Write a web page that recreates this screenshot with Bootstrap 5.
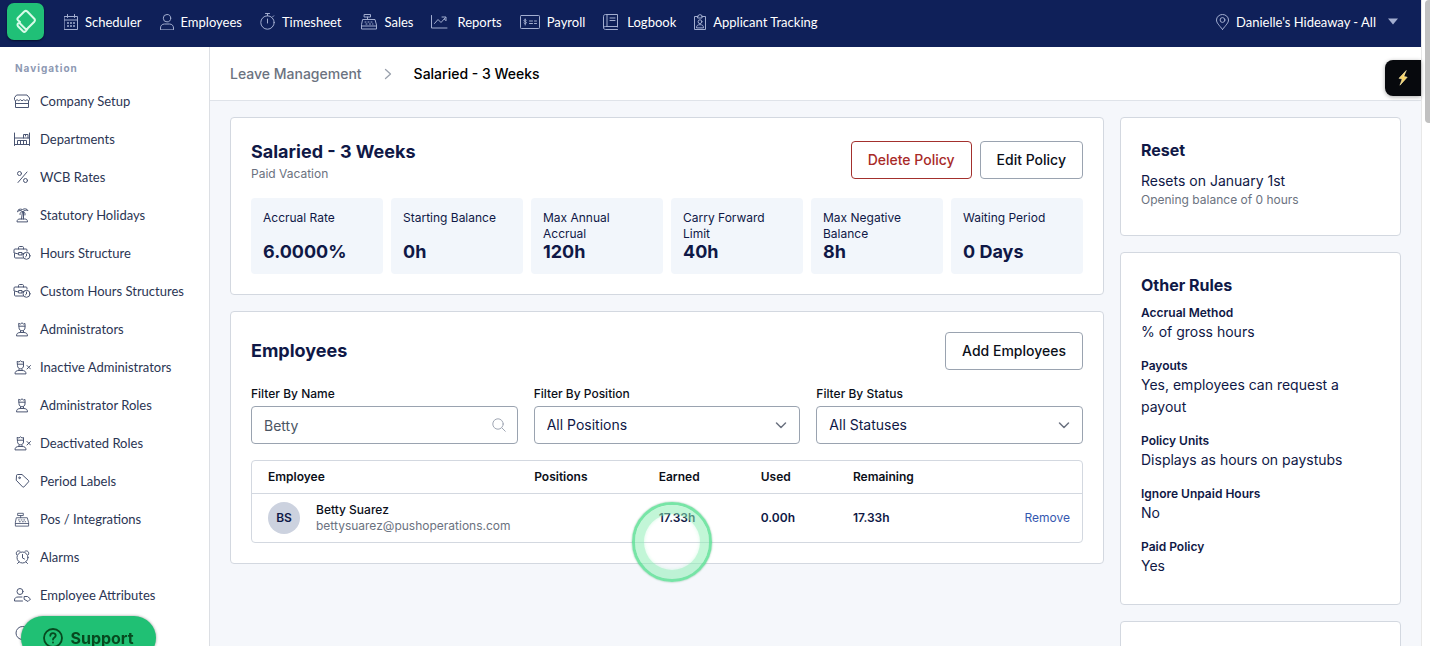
<!DOCTYPE html>
<html lang="en">
<head>
<meta charset="utf-8">
<meta name="viewport" content="width=device-width, initial-scale=1">
<title>Leave Management</title>
<link href="https://cdn.jsdelivr.net/npm/bootstrap@5.3.0/dist/css/bootstrap.min.css" rel="stylesheet">
<style>
  :root { --ink: #0f1846; --navy: #0f2059; --line: #d3d8e0; --muted: #6b7280; --page: #f5f7fb; }
  body { font-family: Inter, sans-serif; font-size: 14px; line-height: 22px; color: var(--ink); background: #fff; }
  svg { flex: none; fill: none; stroke: currentColor; stroke-linecap: round; stroke-linejoin: round; }

  .topbar { height: 47px; background: var(--navy); font-family: Lato, sans-serif; padding: 0 22px 4px 7px; }
  .topbar a { color: #fff; font-size: 13px; line-height: 20px; gap: 7px; }
  .topbar a svg { color: #a3aed0; stroke-width: 1; }
  .main-nav { gap: 18px; margin-left: 20px; }
  .brand { width: 37px; height: 37px; border-radius: 7px; background: #20c077; box-shadow: 0 1px 2px #0008; }
  .topbar .brand svg { color: #d9fbe9; stroke-width: 2; }

  .sidebar { width: 210px; border-right: 1px solid #dcdfe4; font-family: Lato, sans-serif; padding-top: 11px; }
  .side-title { font-family: Inter, sans-serif; font-size: 10px; line-height: 20px; font-weight: 700; letter-spacing: 1px; color: #8e99b3; padding-left: 15px; margin-bottom: 4px; }
  .sidebar a { height: 38px; padding-left: 13px; gap: 9px; color: #2b3553; font-size: 13px; line-height: 20px; }
  .sidebar a svg { color: #4a5572; }

  .crumbs { height: 54px; border-bottom: 1px solid #dfe3e9; padding-left: 20px; gap: 22px; font-weight: 500; }
  .crumbs a { color: var(--muted); }
  .crumbs svg { color: #9aa1ad; }
  .page-area { background: var(--page); }
  .workspace { padding: 16px 20px 0; gap: 16px; }
  .panel { background: #fff; border: 1px solid var(--line); border-radius: 4px; padding: 20px; }
  .rail { width: 281px; }
  .rail .panel { padding-bottom: 27px; }
  .rail h2 { font-size: 16px; line-height: 24px; font-weight: 700; margin: 0 0 8px; }
  .title { font-size: 18px; line-height: 28px; font-weight: 700; margin: 0; }
  .fine { font-size: 12px; line-height: 16px; }
  .dim { color: var(--muted); }

  .btn-plain { height: 38px; padding: 0 16px; border: 1px solid #9aa3b0; border-radius: 4px; background: #fff; color: #0b0f19; font-size: 14px; font-weight: 500; line-height: 20px; }
  .btn-plain.danger { border-color: #a3302d; color: #a82a27; }

  .tiles { display: grid; grid-template-columns: repeat(6, 1fr); gap: 8px; }
  .tile { background: #f2f6fb; border-radius: 4px; padding: 12px; }
  .tile dt { font-weight: 400; min-height: 32px; }
  .tile dd { font-size: 18px; line-height: 20px; font-weight: 700; margin: 0; }

  .filters { display: grid; grid-template-columns: repeat(3, 1fr); gap: 16px; }
  .filters label { font-weight: 500; color: #0b0f19; margin-bottom: 4px; display: block; }
  .filters .form-control, .filters .form-select { height: 38px; border: 1px solid #9aa3b0; border-radius: 4px; font-size: 14px; line-height: 20px; padding: 0 12px; color: var(--ink); }
  .filters .form-control { color: #4b5563; padding-right: 36px; }
  .filters .form-select { background-image: url("data:image/svg+xml,%3Csvg xmlns='http://www.w3.org/2000/svg' viewBox='0 0 12 12'%3E%3Cpath d='M1.500 4l4.500 4.500L10.500 4' fill='none' stroke='%236b7280' stroke-width='1.500' stroke-linecap='round' stroke-linejoin='round'/%3E%3C/svg%3E"); background-size: 12px 12px; background-position: right 12px center; }
  .lens { right: 12px; top: 12px; color: #a0a7b4; }

  .grid-wrap { border: 1px solid var(--line); border-radius: 4px; }
  .grid-wrap table { width: 100%; table-layout: fixed; font-size: 12px; line-height: 16px; }
  .grid-wrap th { height: 32px; padding: 0; font-weight: 600; color: #0b0f19; border-bottom: 1px solid var(--line); }
  .grid-wrap td { height: 49px; padding: 0; font-weight: 600; }
  .grid-wrap th:first-child, .grid-wrap td:first-child { padding-left: 16px; }
  .c-name { width: 34%; } .c-pos { width: 15%; } .c-earned { width: 12.300%; } .c-used { width: 11.100%; } .c-left { width: 12%; }
  .avatar { width: 32px; height: 32px; border-radius: 50%; background: #ccd2df; }
  .person { color: #0b0f19; font-weight: 500; }
  .remove { color: #3558b0; font-weight: 400; }
  .pulse { left: -27px; top: 8px; width: 80px; height: 80px; border-radius: 50%; border: 3px solid #5fe096d9; box-shadow: 0 0 2px #7fb896, inset 0 0 0 9px #8defb46b, inset 0 0 3px 10px #8defb433; pointer-events: none; z-index: 2; }

  .rules { margin: 0; display: grid; gap: 15px; }
  .rules dt { font-weight: 600; }
  .rules dd { margin: 0; }

  .bolt { top: 60px; right: 9px; width: 36px; height: 36px; border: 0; border-radius: 8px 0 0 8px; background: #07090d; box-shadow: 0 1px 4px #0005; }
  .support { left: 21px; bottom: -14px; width: 135px; height: 44px; border: 0; border-radius: 22px; background: #20c074; color: #07491f; font-size: 16px; font-weight: 700; line-height: 20px; gap: 7px; box-shadow: 0 0 3px #0006; }
  .scroll-track { width: 9px; border-left: 1px solid #e8e8e8; padding-left: 3px; }
  .scroll-thumb { height: 123px; background: #c1c1c1; border-radius: 4px 0 0 4px; }
</style>
</head>
<body>
<svg class="d-none">
  <symbol id="i-register" viewBox="0 0 18 17"><path d="M4.500 1.500h6v2.500h-6zM7.500 4v2.500M3 6.500h12l1.500 5.500v4h-15v-4zM1.500 13h15M5 9h1M8 9h1M11 9h1M6 11h1M9.500 11h1M13 11h-.5"/></symbol>
  <symbol id="i-admin" viewBox="0 0 18 16"><path d="M6 2.500l1.500.500L9 1.800l1.500 1.200 1.500-.5v4.500c0 1.500-1.300 2.800-3 2.800S6 8.500 6 7zM6 5.200h6M7.500 10v1.500M10.500 10v1.500M3.500 14.500c0-2.200 1.500-3 4-3h3c2.500 0 4 .8 4 3z"/></symbol>
  <symbol id="i-admin-x" viewBox="0 0 18 16"><path d="M4.500 2.500l1.500.500 1.500-1.200L9 3l1.500-.5V7c0 1.500-1.300 2.800-3 2.800S4.500 8.500 4.500 7zM4.500 5.200h6M6 10v1.500M9 10v1.500M2 14.500c0-2.200 1.500-3 4-3h3c2.500 0 4 .8 4 3zM14 6.500l3.500 3.500M17.500 6.500L14 10"/></symbol>
  <symbol id="i-case" viewBox="0 0 18 16"><path d="M5.500 4V2.500C5.500 2 6 1.500 6.500 1.500h3c.5 0 1 .5 1 1V4M10 13H2.500c-.6 0-1-.4-1-1V8.500L1 8V5c0-.6.4-1 1-1h11c.8 0 1 .4 1 1v1M1.500 8l4 1M6 7.500h3V10H6zM9 9l2-.5"/><circle cx="13.500" cy="10.800" r="3.500"/><path d="M13.500 9v2l-1 .800"/></symbol>
</svg>

<div class="d-flex vh-100 overflow-hidden">
  <div class="d-flex flex-column flex-grow-1">
    <header class="topbar d-flex align-items-center flex-shrink-0">
      <a class="brand d-flex align-items-center justify-content-center" href="#" aria-label="Home">
        <svg width="22" height="26" viewBox="0 0 22 26"><path d="M5 13l-2-1.700q-1.200-1.300 0-2.600l6.300-6.200q1.500-1.300 3 0l7 7.200q1.200 1.500 0 3L12.500 19.500q-1.300 1.200-2.500 0L5 14.500q-1-1-2 0t0 2.800l5 5q1.300 1.200 2.500 0l2-2.500"/></svg>
      </a>
      <nav class="main-nav d-flex align-items-center flex-grow-1" aria-label="Main">
        <a class="d-flex align-items-center text-decoration-none" href="#"><svg width="14" height="16" viewBox="0 0 14 16"><path d="M.5 2.500h13v13H.5zM.5 6h13M3.500.5v3M10.500.5v3"/><path stroke-width="1.500" stroke-linecap="butt" d="M3 9h2M6 9h2M9 9h2M3 12h2M6 12h2M9 12h2"/></svg>Scheduler</a>
        <a class="d-flex align-items-center text-decoration-none" href="#"><svg width="14" height="16" viewBox="0 0 14 16"><circle cx="7" cy="4.200" r="3.700"/><path d="M.5 15.500v-1.500c0-2.200 1.500-4 4-4h5c2.500 0 4 1.800 4 4v1.500z"/></svg>Employees</a>
        <a class="d-flex align-items-center text-decoration-none" href="#"><svg width="15" height="17" viewBox="0 0 15 17"><circle cx="7.500" cy="9.500" r="6.700"/><path d="M5.500.5h4M7.500.5v2.300M7.500 6v4M12.500 4l1.200-1.200"/></svg>Timesheet</a>
        <a class="d-flex align-items-center text-decoration-none" href="#"><svg width="18" height="17"><use href="#i-register"/></svg>Sales</a>
        <a class="d-flex align-items-center text-decoration-none" href="#"><svg width="19" height="14" viewBox="0 0 19 14"><path d="M.5.5v12.500h15.500M3.500 8.500L7 4.500l3 3 4.500-5M11 2h4v3.800l-1.500-1.500"/></svg>Reports</a>
        <a class="d-flex align-items-center text-decoration-none" href="#"><svg width="20" height="14" viewBox="0 0 20 14"><rect x=".5" y=".5" width="19" height="13" rx=".8"/><path d="M6.300 5.200c-.4-.7-2.300-.8-2.300.4 0 1.400 2.400.6 2.400 2.100 0 1.100-2 1.100-2.500.3M5.200 4v6M9.500 6h3M14.500 6h2M9.500 8.500h3M14.500 8.500h2"/></svg>Payroll</a>
        <a class="d-flex align-items-center text-decoration-none" href="#"><svg width="17" height="16" viewBox="0 0 17 16"><path d="M14.500 13V.5H2.500C1.300.5.500 1.300.5 2.300v11.200c0 1.200.8 2 2 2h12M14.500 12.500H2.500c-1.200 0-2 .5-2 1.400M4 .5v12M7 4h5M7 6.500h5"/></svg>Logbook</a>
        <a class="d-flex align-items-center text-decoration-none" href="#"><svg width="12" height="16" viewBox="0 0 12 16"><path d="M4 2.500H.5v13h11v-13H8M4 1.500Q6-.500 8 1.500V4H4z"/><circle cx="6" cy="7.700" r="1.900"/><path d="M2.500 13.500c0-2 1.200-2.800 3.500-2.800s3.500.8 3.500 2.800z"/></svg>Applicant Tracking</a>
      </nav>
      <a class="d-flex align-items-center text-decoration-none" href="#"><svg width="13" height="16" viewBox="0 0 13 16"><path d="M6.500 15.500C3 10.800.5 9 .5 6a6 5.500 0 0 1 12 0c0 3-2.500 4.800-6 9.500z"/><circle cx="6.500" cy="6" r="2.400"/></svg>Danielle's Hideaway - All<svg class="ms-1" width="12" height="7" viewBox="0 0 12 7"><path fill="#a3aed0" stroke="none" d="M1 .5h10L6 6.500z"/></svg></a>
    </header>

    <div class="d-flex flex-grow-1 overflow-hidden">
      <nav class="sidebar flex-shrink-0 overflow-hidden" aria-label="Navigation">
        <div class="side-title">Navigation</div>
        <a class="d-flex align-items-center text-decoration-none" href="#"><svg width="18" height="16" viewBox="0 0 18 16"><path d="M4 2h10l2.500 3v1.500c0 1.500-2 1.500-2.500 0-.5 1.500-2.500 1.500-3.200 0-.6 1.500-2.900 1.500-3.500 0-.7 1.500-2.700 1.500-3.200 0-.6 1.500-2.600 1.500-2.600 0V5zM2.500 8v6.500h13V8M2.500 10.500h13"/></svg>Company Setup</a>
        <a class="d-flex align-items-center text-decoration-none" href="#"><svg width="18" height="16" viewBox="0 0 18 16"><path d="M1.500 2v12.500M16.500 2v12.500M1.500 7h15M1.500 13.500h15M10.500 7V3.500h4.500V7M12.500 3.500v1.500M4.500 13.500v-4h9v4M7.500 9.500v4M10.500 9.500v4"/></svg>Departments</a>
        <a class="d-flex align-items-center text-decoration-none" href="#"><svg width="18" height="16" viewBox="0 0 18 16"><circle cx="6.500" cy="4.500" r="2"/><circle cx="12.500" cy="11.500" r="2"/><path d="M14 3L5 13.500"/></svg>WCB Rates</a>
        <a class="d-flex align-items-center text-decoration-none" href="#"><svg width="18" height="16" viewBox="0 0 18 16"><path d="M9.500 4.500C8 3 6 3.200 4.500 4.800 4.800 2.500 6.500 1.500 9.500 2.500c2-1.300 4.500-.7 5.500 1-2-.5-3.500-.2-5 1zM9.500 4.500c2 .3 3 1.500 2.500 3.500M9.500 4.500c-2 .5-2.700 1.500-2.500 3M9.500 4.500L8.500 12M10.500 5v7M4 14.500c0-1.800 1.200-2.500 3-2.500h4.500c2 0 3 .7 3 2.500z"/></svg>Statutory Holidays</a>
        <a class="d-flex align-items-center text-decoration-none" href="#"><svg width="18" height="16"><use href="#i-case"/></svg>Hours Structure</a>
        <a class="d-flex align-items-center text-decoration-none" href="#"><svg width="18" height="16"><use href="#i-case"/></svg>Custom Hours Structures</a>
        <a class="d-flex align-items-center text-decoration-none" href="#"><svg width="18" height="16"><use href="#i-admin"/></svg>Administrators</a>
        <a class="d-flex align-items-center text-decoration-none" href="#"><svg width="18" height="16"><use href="#i-admin-x"/></svg>Inactive Administrators</a>
        <a class="d-flex align-items-center text-decoration-none" href="#"><svg width="18" height="16"><use href="#i-admin"/></svg>Administrator Roles</a>
        <a class="d-flex align-items-center text-decoration-none" href="#"><svg width="18" height="16"><use href="#i-admin-x"/></svg>Deactivated Roles</a>
        <a class="d-flex align-items-center text-decoration-none" href="#"><svg width="18" height="16" viewBox="0 0 18 16"><path d="M3.500 2.500q0-1 1-1h4.500l6.500 6q.5.700 0 1.400l-4.500 5q-.7.500-1.400 0L3.500 7.500z"/><circle cx="6.500" cy="4.800" r=".8"/></svg>Period Labels</a>
        <a class="d-flex align-items-center text-decoration-none" href="#"><svg width="18" height="15"><use href="#i-register"/></svg>Pos / Integrations</a>
        <a class="d-flex align-items-center text-decoration-none" href="#"><svg width="18" height="16" viewBox="0 0 18 16"><circle cx="9.500" cy="8.500" r="5.500"/><path d="M9.500 5.500v3.500l2 1M3.500 5.500C2.500 3 4.500 1 7 2.200M15.500 5.500c1-2.500-1-4.500-3.500-3.300M6 13l-1.500 1.500M13 13l1.500 1.500"/></svg>Alarms</a>
        <a class="d-flex align-items-center text-decoration-none" href="#"><svg width="18" height="16" viewBox="0 0 18 16"><circle cx="7" cy="4.500" r="3"/><path d="M9.500 14H1.500v-1c0-2 1.500-3 3.500-3h4M11.500 9.500h3l3 2.500-2.500 2.500-3.500-2z"/></svg>Employee Attributes</a>
        <a class="d-flex align-items-center text-decoration-none" href="#" aria-label="More"><svg width="18" height="16" viewBox="0 0 18 16"><circle cx="9.500" cy="8" r="6.500"/></svg></a>
      </nav>

      <div class="page-area d-flex flex-column flex-grow-1 overflow-hidden">
        <nav class="crumbs bg-white d-flex align-items-center flex-shrink-0" aria-label="Breadcrumb">
          <a class="text-decoration-none" href="#">Leave Management</a>
          <svg width="8" height="12" viewBox="0 0 8 12" stroke-width="1.300"><path d="M1.500 1.500L6.500 6l-5 4.500"/></svg>
          <span class="text-black">Salaried - 3 Weeks</span>
        </nav>

        <main class="workspace d-flex align-items-start">
          <div class="d-flex flex-column gap-3 flex-grow-1">
            <section class="panel">
              <div class="d-flex justify-content-between align-items-center mb-3">
                <div>
                  <h1 class="title">Salaried - 3 Weeks</h1>
                  <div class="fine dim">Paid Vacation</div>
                </div>
                <div class="d-flex gap-2">
                  <button type="button" class="btn btn-plain danger">Delete Policy</button>
                  <button type="button" class="btn btn-plain">Edit Policy</button>
                </div>
              </div>
              <div class="tiles">
                <dl class="tile mb-0"><dt class="fine">Accrual Rate</dt><dd>6.0000%</dd></dl>
                <dl class="tile mb-0"><dt class="fine">Starting Balance</dt><dd>0h</dd></dl>
                <dl class="tile mb-0"><dt class="fine">Max Annual Accrual</dt><dd>120h</dd></dl>
                <dl class="tile mb-0"><dt class="fine">Carry Forward Limit</dt><dd>40h</dd></dl>
                <dl class="tile mb-0"><dt class="fine">Max Negative Balance</dt><dd>8h</dd></dl>
                <dl class="tile mb-0"><dt class="fine">Waiting Period</dt><dd>0 Days</dd></dl>
              </div>
            </section>

            <section class="panel">
              <div class="d-flex justify-content-between align-items-center mb-3">
                <h2 class="title">Employees</h2>
                <button type="button" class="btn btn-plain">Add Employees</button>
              </div>
              <div class="filters mb-3">
                <div>
                  <label class="fine" for="f-name">Filter By Name</label>
                  <div class="position-relative">
                    <input id="f-name" class="form-control" type="text" value="Betty">
                    <svg class="lens position-absolute" width="14" height="14" viewBox="0 0 14 14"><circle cx="6" cy="6" r="5.200"/><path d="M10 10l3.300 3.300"/></svg>
                  </div>
                </div>
                <div>
                  <label class="fine" for="f-pos">Filter By Position</label>
                  <select id="f-pos" class="form-select"><option>All Positions</option></select>
                </div>
                <div>
                  <label class="fine" for="f-stat">Filter By Status</label>
                  <select id="f-stat" class="form-select"><option>All Statuses</option></select>
                </div>
              </div>
              <div class="grid-wrap">
                <table>
                  <colgroup><col class="c-name"><col class="c-pos"><col class="c-earned"><col class="c-used"><col class="c-left"><col></colgroup>
                  <thead><tr><th>Employee</th><th>Positions</th><th>Earned</th><th>Used</th><th>Remaining</th><th></th></tr></thead>
                  <tbody>
                    <tr>
                      <td><div class="d-flex align-items-center gap-3"><span class="avatar d-flex align-items-center justify-content-center">BS</span><div><div class="person">Betty Suarez</div><div class="dim fw-normal">bettysuarez@pushoperations.com</div></div></div></td>
                      <td></td>
                      <td class="position-relative">17.33h<span class="pulse position-absolute"></span></td>
                      <td>0.00h</td>
                      <td>17.33h</td>
                      <td class="text-end pe-2"><a class="remove text-decoration-none me-1" href="#">Remove</a></td>
                    </tr>
                  </tbody>
                </table>
              </div>
            </section>
          </div>

          <aside class="rail d-flex flex-column gap-3 flex-shrink-0">
            <section class="panel">
              <h2>Reset</h2>
              <div>Resets on January 1st</div>
              <div class="fine dim">Opening balance of 0 hours</div>
            </section>
            <section class="panel">
              <h2>Other Rules</h2>
              <dl class="rules">
                <div><dt class="fine">Accrual Method</dt><dd>% of gross hours</dd></div>
                <div><dt class="fine">Payouts</dt><dd>Yes, employees can request a payout</dd></div>
                <div><dt class="fine">Policy Units</dt><dd>Displays as hours on paystubs</dd></div>
                <div><dt class="fine">Ignore Unpaid Hours</dt><dd>No</dd></div>
                <div><dt class="fine">Paid Policy</dt><dd>Yes</dd></div>
              </dl>
            </section>
            <section class="panel"></section>
          </aside>
        </main>
      </div>
    </div>
  </div>
  <div class="scroll-track flex-shrink-0"><div class="scroll-thumb"></div></div>
</div>

<button type="button" class="bolt position-fixed d-flex align-items-center justify-content-center p-0" aria-label="Quick actions">
  <svg width="10" height="16" viewBox="0 0 10 16"><path fill="#f6d365" stroke="#fbeeb8" stroke-width=".6" d="M8 .8L1 8.300l3.200.7L2 15.200 9.200 7.200 6 6.500z"/></svg>
</button>
<button type="button" class="support position-fixed d-flex align-items-center justify-content-center p-0">
  <svg width="20" height="20" viewBox="0 0 20 20" stroke-width="1.800"><circle cx="10" cy="10" r="9"/><path d="M7.300 7.800c0-3.600 5.400-3.400 5.400-.3 0 2-2.700 2-2.700 4M10 14.400v.2"/></svg>Support
</button>
<script src="https://cdn.jsdelivr.net/npm/bootstrap@5.3.0/dist/js/bootstrap.bundle.min.js"></script>
</body>
</html>
